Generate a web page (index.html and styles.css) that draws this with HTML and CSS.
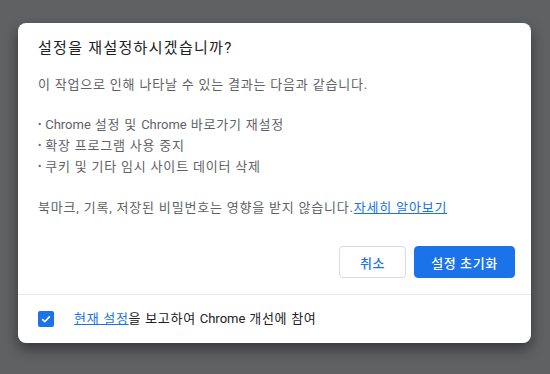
FILE: index.html
```html
<!DOCTYPE html>
<html lang="ko">
<head>
<meta charset="utf-8">
<link rel="stylesheet" href="styles.css">
</head>
<body>
<div class="dialog">
  <div class="content">
    <h1 class="title">설정을 재설정하시겠습니까?</h1>
    <p class="para">이 작업으로 인해 나타날 수 있는 결과는 다음과 같습니다.</p>
    <ul class="list">
      <li><span class="en">Chrome</span> 설정 및 <span class="en">Chrome</span> 바로가기 재설정</li>
      <li>확장 프로그램 사용 중지</li>
      <li>쿠키 및 기타 임시 사이트 데이터 삭제</li>
    </ul>
    <p class="para">북마크, 기록, 저장된 비밀번호는 영향을 받지 않습니다.<a class="link" href="#">자세히 알아보기</a></p>
  </div>
  <div class="actions">
    <button class="btn btn-cancel">취소</button>
    <button class="btn btn-primary">설정 초기화</button>
  </div>
  <div class="footer">
    <span class="checkbox">
      <svg width="12" height="12" viewBox="0 0 12 12"><path d="M2.2 6.2 L4.8 8.7 L9.8 3.4" fill="none" stroke="#fff" stroke-width="1.6"/></svg>
    </span>
    <span class="footer-text"><a class="link" href="#">현재 설정</a>을 보고하여 <span class="en">Chrome</span> 개선에 참여</span>
  </div>
</div>
</body>
</html>
```
FILE: styles.css
```css
html, body {
  margin: 0;
  padding: 0;
}
body {
  background: #606163;
  width: 550px;
  height: 374px;
  overflow: hidden;
  padding: 23px 0 0 18px;
  box-sizing: border-box;
  font-family: Roboto, "Noto Sans CJK KR", sans-serif;
}
.dialog {
  width: 513px;
  height: 320px;
  background: #fff;
  border-radius: 8px;
  box-shadow: 0 6px 14px rgba(0,0,0,0.45);
  display: flex;
  flex-direction: column;
  box-sizing: border-box;
}
.content {
  padding: 15px 20px 0 20px;
}
.title {
  margin: 0;
  font-size: 15px;
  font-weight: 400;
  line-height: 20px;
  letter-spacing: 1.3px;
  color: #202124;
}
.para {
  margin: 17px 0 0 0;
  font-size: 13px;
  line-height: 20px;
  letter-spacing: 0.8px;
  color: #5f6368;
}
.list {
  list-style: none;
  margin: 20px 0 0 0;
  padding: 0;
  font-size: 13px;
  line-height: 20px;
  letter-spacing: 0.8px;
  color: #5f6368;
}
.list li::before {
  content: "•";
  margin-right: 3px;
  font-size: 10px;
  position: relative;
  top: -1px;
}
.en {
  letter-spacing: 0;
}
.list + .para {
  margin-top: 20px;
}
.link {
  color: #1a73e8;
  text-decoration: underline;
}
.actions {
  display: flex;
  justify-content: flex-end;
  gap: 8px;
  padding: 28px 16px 16px 0;
}
.btn {
  height: 32px;
  border-radius: 4px;
  font-family: Roboto, "Noto Sans CJK KR", sans-serif;
  font-size: 13px;
  font-weight: 500;
  letter-spacing: 0.6px;
  box-sizing: border-box;
  cursor: pointer;
}
.btn-cancel {
  width: 67px;
  background: #fff;
  border: 1px solid #dadce0;
  color: #1a73e8;
}
.btn-primary {
  width: 101px;
  background: #1a73e8;
  border: 1px solid #1a73e8;
  color: #fff;
}
.footer {
  border-top: 1px solid #e8eaed;
  display: flex;
  align-items: center;
  padding: 0 20px;
  flex: 1;
}
.checkbox {
  width: 16px;
  height: 16px;
  border-radius: 2px;
  background: #1a73e8;
  display: flex;
  align-items: center;
  justify-content: center;
  margin-right: 20px;
}
.footer-text {
  font-size: 13px;
  color: #202124;
  line-height: 20px;
  letter-spacing: 0.7px;
}
```
